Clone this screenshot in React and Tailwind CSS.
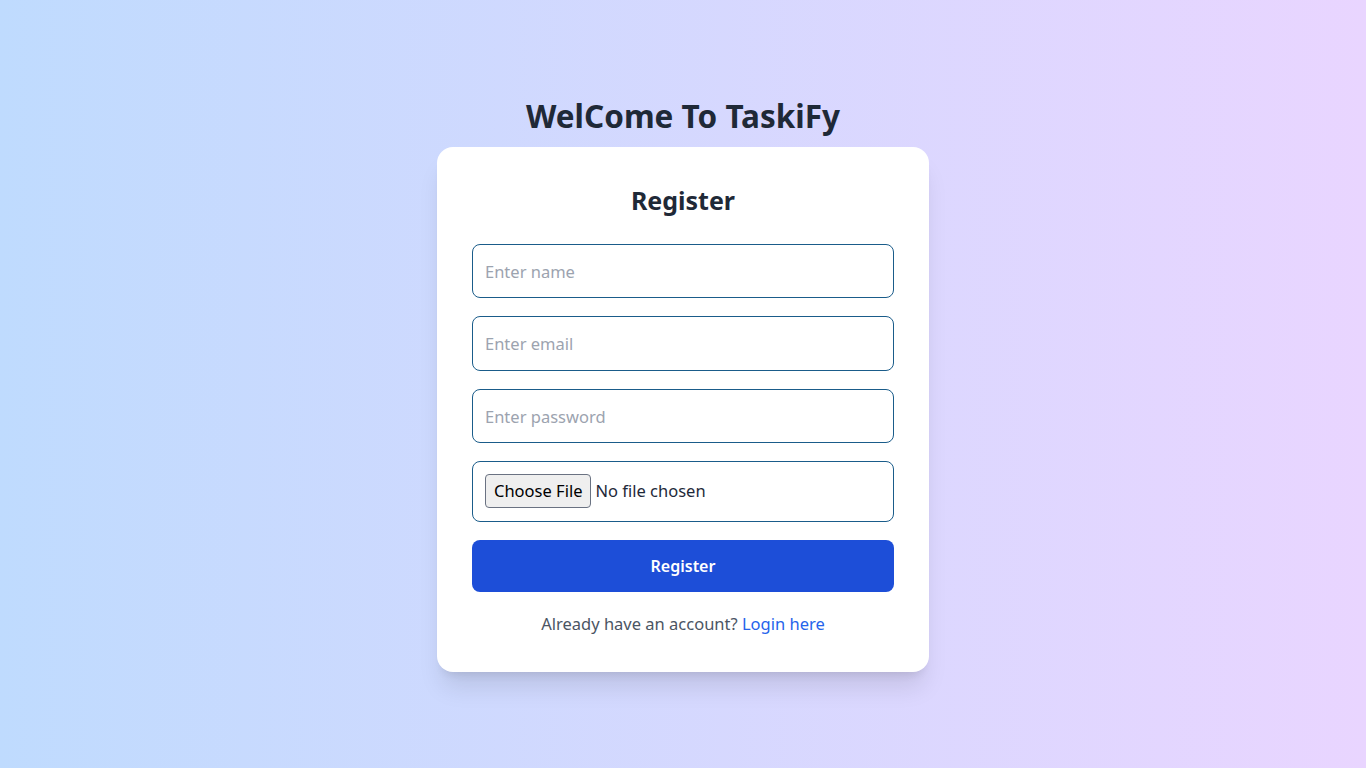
import React from 'react';

export default function App() {
  const inputCls = 'w-full rounded-lg border border-[#1a5c8a] bg-white px-3 text-[16.5px] leading-7 text-gray-800 placeholder:text-[#9ca3af] outline-none';

  return (
    <div className="min-h-screen w-full bg-gradient-to-r from-[#bfdbfe] to-[#e9d5ff] flex flex-col items-center justify-center font-['Noto_Sans',sans-serif]">
      <h1 className="text-[31.5px] leading-10 font-bold text-[#1f2937] mb-[11px]">WelCome To TaskiFy</h1>
      <div className="w-[492px] bg-white rounded-2xl shadow-xl px-[35px] pt-[37px] pb-[34px]">
        <h2 className="text-[25px] leading-8 font-bold text-[#1f2937] text-center mb-[28px]">Register</h2>
        <form className="flex flex-col gap-[18px]" onSubmit={(e) => e.preventDefault()}>
          <input type="text" placeholder="Enter name" className={`${inputCls} h-[54.5px]`} />
          <input type="email" placeholder="Enter email" className={`${inputCls} h-[54.5px]`} />
          <input type="password" placeholder="Enter password" className={`${inputCls} h-[54.5px]`} />
          <input type="file" className={`${inputCls} h-[61px] py-3 text-black file:mr-1 file:px-2 file:py-0.5 file:text-[16.5px] file:border file:border-gray-500 file:rounded-sm file:bg-[#efefef] file:text-black`} />
          <button type="submit" className="w-full h-[52px] rounded-lg bg-[#1d4ed8] text-base leading-7 font-semibold text-white">Register</button>
        </form>
        <p className="mt-[18px] text-center text-[16.5px] leading-7 text-[#4b5563]">
          Already have an account? <a href="#" className="text-[#2563eb]">Login here</a>
        </p>
      </div>
    </div>
  );
}
